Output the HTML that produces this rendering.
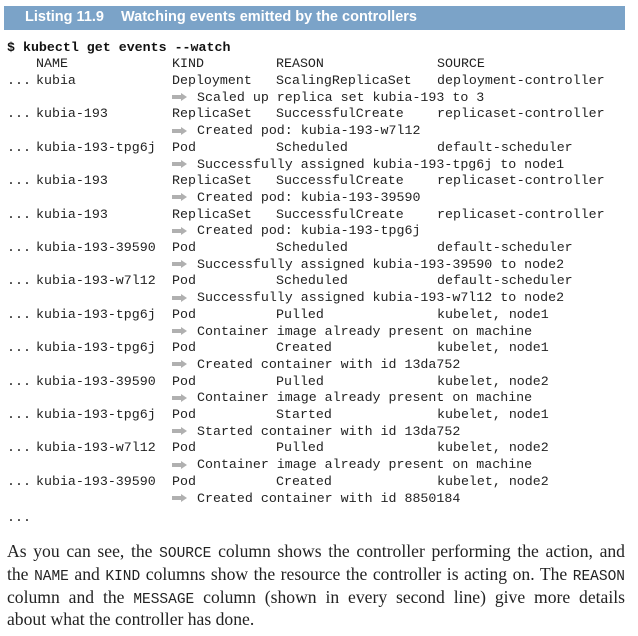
<!DOCTYPE html>
<html><head><style>
body{margin:0;width:638px;height:636px;background:#fff;position:relative;overflow:hidden}
.bar{position:absolute;left:4px;top:6px;width:621px;height:24px;background:#7ba3c8}
.bar span{position:absolute;top:3px;font:bold 14.5px "Liberation Sans",sans-serif;color:#fff}
.l{position:absolute;font:13.3px/16px "Liberation Mono",monospace;color:#222;white-space:pre}
.b{font-weight:bold;color:#111}
.ar{position:absolute;width:16px;height:8px}
.p{position:absolute;left:7px;width:618px;margin:0;font:17.6px/22.6px "Liberation Serif",serif;text-align:justify;text-align-last:justify;color:#222;white-space:nowrap}
.p code{font:14.5px "Liberation Mono",monospace}
</style></head><body>
<div class="bar"><span style="left:21px">Listing 11.9</span><span style="left:117px">Watching events emitted by the controllers</span></div>
<div class="l b" style="left:7px;top:40px">$ kubectl get events --watch</div>
<div id="t"></div>
<div class="p" style="top:540px">As you can see, the <code>SOURCE</code> column shows the controller performing the action, and</div>
<div class="p" style="top:563px">the <code>NAME</code> and <code>KIND</code> columns show the resource the controller is acting on. The <code>REASON</code></div>
<div class="p" style="top:586px">column and the <code>MESSAGE</code> column (shown in every second line) give more details</div>
<div class="p" style="top:608px;text-align-last:left">about what the controller has done.</div>
<script>
var rows=[["kubia","Deployment","ScalingReplicaSet","deployment-controller","Scaled up replica set kubia-193 to 3"],
["kubia-193","ReplicaSet","SuccessfulCreate","replicaset-controller","Created pod: kubia-193-w7l12"],
["kubia-193-tpg6j","Pod","Scheduled","default-scheduler","Successfully assigned kubia-193-tpg6j to node1"],
["kubia-193","ReplicaSet","SuccessfulCreate","replicaset-controller","Created pod: kubia-193-39590"],
["kubia-193","ReplicaSet","SuccessfulCreate","replicaset-controller","Created pod: kubia-193-tpg6j"],
["kubia-193-39590","Pod","Scheduled","default-scheduler","Successfully assigned kubia-193-39590 to node2"],
["kubia-193-w7l12","Pod","Scheduled","default-scheduler","Successfully assigned kubia-193-w7l12 to node2"],
["kubia-193-tpg6j","Pod","Pulled","kubelet, node1","Container image already present on machine"],
["kubia-193-tpg6j","Pod","Created","kubelet, node1","Created container with id 13da752"],
["kubia-193-39590","Pod","Pulled","kubelet, node2","Container image already present on machine"],
["kubia-193-tpg6j","Pod","Started","kubelet, node1","Started container with id 13da752"],
["kubia-193-w7l12","Pod","Pulled","kubelet, node2","Container image already present on machine"],
["kubia-193-39590","Pod","Created","kubelet, node2","Created container with id 8850184"]];
var h='';
function d(x,y,s){h+='<div class="l" style="left:'+x+'px;top:'+y+'px">'+s+'</div>';}
d(36,56,"NAME");d(172,56,"KIND");d(276,56,"REASON");d(437,56,"SOURCE");
rows.forEach(function(r,i){var y=73+i*33.4;
d(7,y,"...");d(36,y,r[0]);d(172,y,r[1]);d(276,y,r[2]);d(437,y,r[3]);
d(197,y+16.7,r[4]);
h+='<svg class="ar" style="left:172px;top:'+(y+20.2)+'px" viewBox="0 0 16 8"><path d="M0 2H9V0L15 4L9 8V6H0Z" fill="#b0b0b0"/></svg>';});
d(7,510,"...");
document.getElementById('t').innerHTML=h;
</script>
</body></html>
